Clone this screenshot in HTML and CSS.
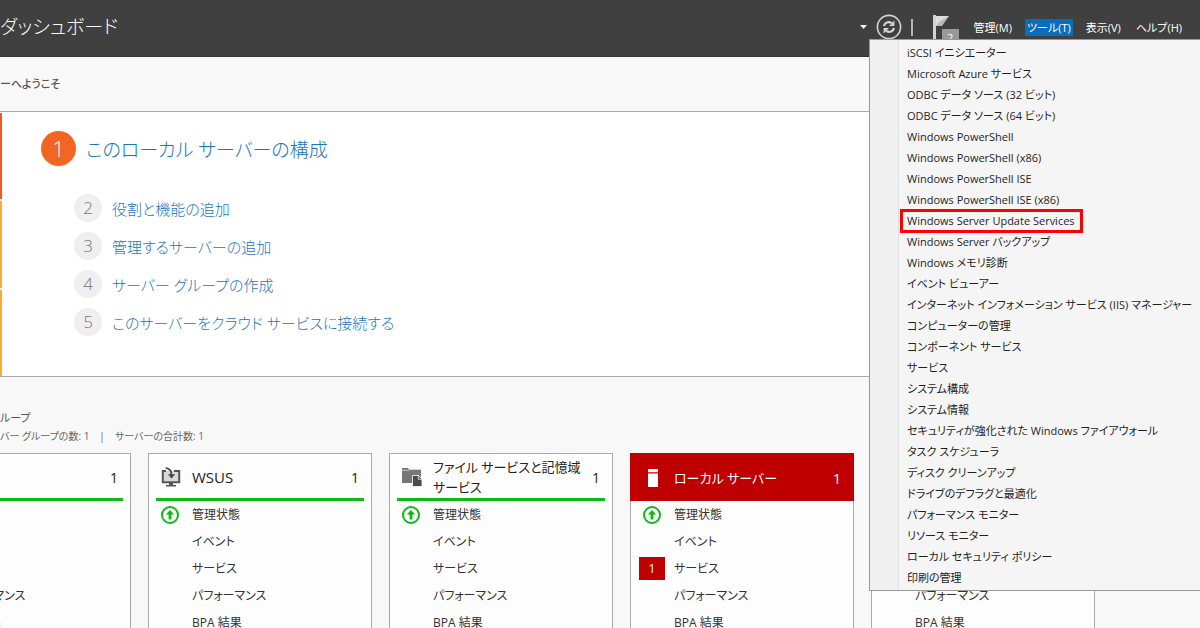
FILE: index.html
```html
<!DOCTYPE html>
<html lang="ja">
<head>
<meta charset="utf-8">
<title>ダッシュボード</title>
<link rel="stylesheet" href="styles.css">
</head>
<body>
<svg class="defs" aria-hidden="true">
  <symbol id="up" viewBox="0 0 20 20"><circle cx="10" cy="10" r="8" fill="#fff" stroke="#0db914" stroke-width="2"/><path d="M10 5 14.2 9.6H11.4V14.5H8.6V9.6H5.8Z" fill="#0db914"/></symbol>
</svg>
<header class="topbar">
  <h1 class="title">ダッシュボード</h1>
  <div class="tools">
    <button class="icon-button" aria-label="履歴"><svg class="caret" viewBox="0 0 8 5"><path d="M0 0H7L3.5 4Z" fill="#eee"/></svg></button>
    <button class="icon-button" aria-label="更新"><svg class="refresh" viewBox="0 0 26 26" fill="none" stroke="#d4d4d4"><circle cx="13" cy="13" r="11.6" stroke-width="1.6"/><path d="M8 12C8.5 8.8 12.5 7 15.8 9.2M18 14C17.5 17.2 13.500 19 10.200 16.800" stroke-width="2.200"/><path d="M18.400 6.500V12H13ZM7.600 19.500V14H13Z" fill="#d4d4d4" stroke="none"/></svg></button>
    <span class="divider"></span>
    <button class="icon-button flag-button" aria-label="通知"><svg class="flag" viewBox="0 0 18 26"><path d="M1 1H4V25H1Z" fill="#d4d4d4"/><path d="M4 2H17L10 12H4Z" fill="#b9b9b9"/><path d="M4 2H17L7 8 4 12Z" fill="#dedede"/></svg><span class="flag-count">2</span></button>
    <nav class="menubar">
      <button class="menu-button">管理(M)</button>
      <button class="menu-button active">ツール(T)</button>
      <button class="menu-button">表示(V)</button>
      <button class="menu-button">ヘルプ(H)</button>
    </nav>
  </div>
  <div class="menu" role="menu">
    <button role="menuitem">iSCSI イニシエーター</button>
    <button role="menuitem">Microsoft Azure サービス</button>
    <button role="menuitem">ODBC データ ソース (32 ビット)</button>
    <button role="menuitem">ODBC データ ソース (64 ビット)</button>
    <button role="menuitem">Windows PowerShell</button>
    <button role="menuitem">Windows PowerShell (x86)</button>
    <button role="menuitem">Windows PowerShell ISE</button>
    <button role="menuitem">Windows PowerShell ISE (x86)</button>
    <button role="menuitem" class="marked">Windows Server Update Services</button>
    <button role="menuitem">Windows Server バックアップ</button>
    <button role="menuitem">Windows メモリ診断</button>
    <button role="menuitem">イベント ビューアー</button>
    <button role="menuitem">インターネット インフォメーション サービス (IIS) マネージャー</button>
    <button role="menuitem">コンピューターの管理</button>
    <button role="menuitem">コンポーネント サービス</button>
    <button role="menuitem">サービス</button>
    <button role="menuitem">システム構成</button>
    <button role="menuitem">システム情報</button>
    <button role="menuitem">セキュリティが強化された Windows ファイアウォール</button>
    <button role="menuitem">タスク スケジューラ</button>
    <button role="menuitem">ディスク クリーンアップ</button>
    <button role="menuitem">ドライブのデフラグと最適化</button>
    <button role="menuitem">パフォーマンス モニター</button>
    <button role="menuitem">リソース モニター</button>
    <button role="menuitem">ローカル セキュリティ ポリシー</button>
    <button role="menuitem">印刷の管理</button>
  </div>
</header>
<main>
  <h2 class="welcome">ーへようこそ</h2>
  <section class="panel">
    <div class="stripes"><span class="stripe hot"></span><span class="stripe"></span><span class="stripe"></span></div>
    <div class="steps">
      <a class="step first" href="#"><span class="num">1</span>このローカル サーバーの構成</a>
      <a class="step" href="#"><span class="num">2</span>役割と機能の追加</a>
      <a class="step" href="#"><span class="num">3</span>管理するサーバーの追加</a>
      <a class="step" href="#"><span class="num">4</span>サーバー グループの作成</a>
      <a class="step" href="#"><span class="num">5</span>このサーバーをクラウド サービスに接続する</a>
    </div>
  </section>
  <section class="groups">
    <h2 class="groups-title">ループ</h2>
    <p class="groups-sub"><span>バー グループの数: 1</span><span>|</span><span>サーバーの合計数: 1</span></p>
    <div class="cards">
      <article class="card">
        <header class="card-head"><span class="card-icon"></span><h3></h3><span>1</span></header>
        <ul><li><svg class="up"><use href="#up"/></svg>管理状態</li><li></li><li></li><li>パフォーマンス</li><li>BPA 結果</li></ul>
      </article>
      <article class="card">
        <header class="card-head"><svg class="card-icon" viewBox="0 0 20 20"><path d="M1.500 4H18V15.500H1.500Z" fill="#d8d8d8"/><path d="M5 4H1.800V15.200H18.200V4H13" fill="none" stroke="#555" stroke-width="2"/><path d="M8 16H12V18H15V19.500H5V18H8Z" fill="#555"/><path d="M4.500 0C9 .5 11.500 3 11.500 7H14.500L10.500 12 6.500 7H9.200C9.200 4 7.500 2.500 4.500 2Z" fill="#484848" stroke="#eee" stroke-width=".4"/></svg><h3 class="latin">WSUS</h3><span>1</span></header>
        <ul><li><svg class="up"><use href="#up"/></svg>管理状態</li><li>イベント</li><li>サービス</li><li>パフォーマンス</li><li>BPA 結果</li></ul>
      </article>
      <article class="card">
        <header class="card-head"><svg class="card-icon" viewBox="0 0 20 20"><path d="M0 1H6L7 2.500H19V16H0Z" fill="#777"/><path d="M0 3.300H7L8 2.300H19" stroke="#ddd" stroke-width=".8" fill="none"/><path d="M10.500 8.500H16.500L20 12V19.500H10.500Z" fill="#4b4b4b" stroke="#fff" stroke-width=".8"/><path d="M16.300 8.500V12.200H20" stroke="#fff" stroke-width=".8" fill="none"/></svg><h3>ファイル サービスと記憶域<br>サービス</h3><span>1</span></header>
        <ul><li><svg class="up"><use href="#up"/></svg>管理状態</li><li>イベント</li><li>サービス</li><li>パフォーマンス</li><li>BPA 結果</li></ul>
      </article>
      <article class="card alert">
        <header class="card-head"><svg class="card-icon" viewBox="0 0 20 20"><path d="M5 1H15V4.200H5ZM5 5.600H15V19H5Z" fill="#fff"/></svg><h3>ローカル サーバー</h3><span>1</span></header>
        <ul><li><svg class="up"><use href="#up"/></svg>管理状態</li><li>イベント</li><li><span class="badge">1</span>サービス</li><li>パフォーマンス</li><li>BPA 結果</li></ul>
      </article>
      <article class="card">
        <header class="card-head"><span class="card-icon"></span><h3></h3><span></span></header>
        <ul><li></li><li></li><li></li><li>パフォーマンス</li><li>BPA 結果</li></ul>
      </article>
    </div>
  </section>
</main>
</body>
</html>
```
FILE: styles.css
```css
* { box-sizing: border-box; margin: 0; padding: 0; }
html { height: 100%; }
body {
  height: 100%;
  overflow: hidden;
  background: #f8f8f8;
  color: #333;
  font-family: "Open Sans", "Noto Sans CJK JP", sans-serif;
  font-size: 12px;
  font-feature-settings: "palt";
}
button { background: none; border: 0; color: inherit; font: inherit; font-feature-settings: inherit; white-space: nowrap; }
a { text-decoration: none; }
ul { list-style: none; }
.defs { display: none; }

.topbar {
  position: relative;
  z-index: 1;
  display: flex;
  justify-content: space-between;
  height: 57px;
  background: #404040;
  border-bottom: 1px solid #333;
  color: #fff;
}
.title { font-size: 19px; line-height: 54px; font-weight: 300; white-space: nowrap; }
.tools { display: flex; align-items: center; height: 54px; padding-right: 16px; }
.icon-button { display: flex; }
.caret { width: 8px; height: 5px; margin-right: 8px; }
.refresh { width: 26px; height: 26px; }
.divider { width: 2px; height: 17px; margin: 0 19px 0 9px; background: #b5b5b5; }
.flag-button { position: relative; width: 28px; }
.flag { width: 18px; height: 26px; }
.flag-count {
  position: absolute;
  left: 10px;
  top: 15px;
  width: 17px;
  height: 16px;
  background: #999;
  font-size: 11px;
  line-height: 18px;
}
.menubar { display: flex; gap: 11px; margin-left: 12px; font-size: 11px; }
.menu-button { height: 17px; padding: 0 2px; line-height: 17px; }
.active { background: #0a6cbd; }

.menu {
  position: absolute;
  top: 39px;
  right: 0;
  width: 331px;
  padding: 2px 0 2px 30px;
  border: 1px solid #999;
  border-right: 0;
  background: linear-gradient(90deg, #f0f0f0 28px, #e0e0e0 28px, #e0e0e0 29px, #f5f5f5 29px);
  color: #1e1e1e;
  font-size: 11px;
}
.menu button { display: block; position: relative; height: 21px; padding: 0 7px; line-height: 21px; }
.marked::after { content: ""; position: absolute; inset: -1px -1px -2px 0; border: 3px solid #f00; }

.welcome { height: 55px; border-bottom: 1px solid #aaa; color: #555; font-size: 11px; font-weight: 500; line-height: 54px; }
.panel { display: flex; height: 265px; background: #fff; border-bottom: 1px solid #aaa; }
.stripes { display: flex; flex-direction: column; gap: 2px; width: 2px; padding-top: 1px; }
.stripe { flex: 1; background: #fdaa38; }
.hot { background: #f4571f; }
.steps { padding: 19px 0 0 39px; }
.step { display: flex; align-items: center; gap: 10px; height: 38px; padding-left: 33px; color: #1b75bb; font-size: 15px; font-weight: 300; white-space: nowrap; }
.num { width: 28px; height: 28px; border-radius: 50%; background: #efefef; color: #777; font-size: 17px; line-height: 28px; text-align: center; }
.first { height: 35px; margin-bottom: 23px; padding: 0; font-size: 19px; }
.first .num { width: 35px; height: 35px; background: #f26522; color: #fff; font-size: 22px; line-height: 35px; }

.groups { padding-top: 32px; }
.groups-title { color: #555; font-size: 11px; font-weight: 400; line-height: 18px; }
.groups-sub { display: flex; gap: 10px; color: #666; font-size: 10px; line-height: 18px; }
.cards { display: flex; gap: 17px; margin: 8px 0 0 -93px; }
.card { flex: 0 0 224px; height: 220px; border: 1px solid #aaa; background: #fdfdfd; }
.card-head { display: flex; align-items: center; height: 47px; margin: 0 7px; padding: 2px 5px 0 5px; border-bottom: 3px solid #0db914; color: #222; font-size: 14px; }
.card-icon { width: 20px; height: 20px; margin-right: 11px; }
.card h3 { flex: 1; font-size: 13px; font-weight: 400; line-height: 20px; }
.card .latin { font-size: 15px; }
.card li { position: relative; height: 27px; padding-left: 43px; line-height: 27px; }
.up { position: absolute; left: 11px; top: 4px; width: 20px; height: 20px; }
.alert .card-head { height: 48px; margin: -1px -1px 0; padding: 2px 13px 0; border: 0; background: #be0000; color: #fff; }
.badge { position: absolute; left: 8px; top: 2px; width: 26px; height: 23px; background: #be0000; color: #fff; line-height: 23px; text-align: center; }
```
